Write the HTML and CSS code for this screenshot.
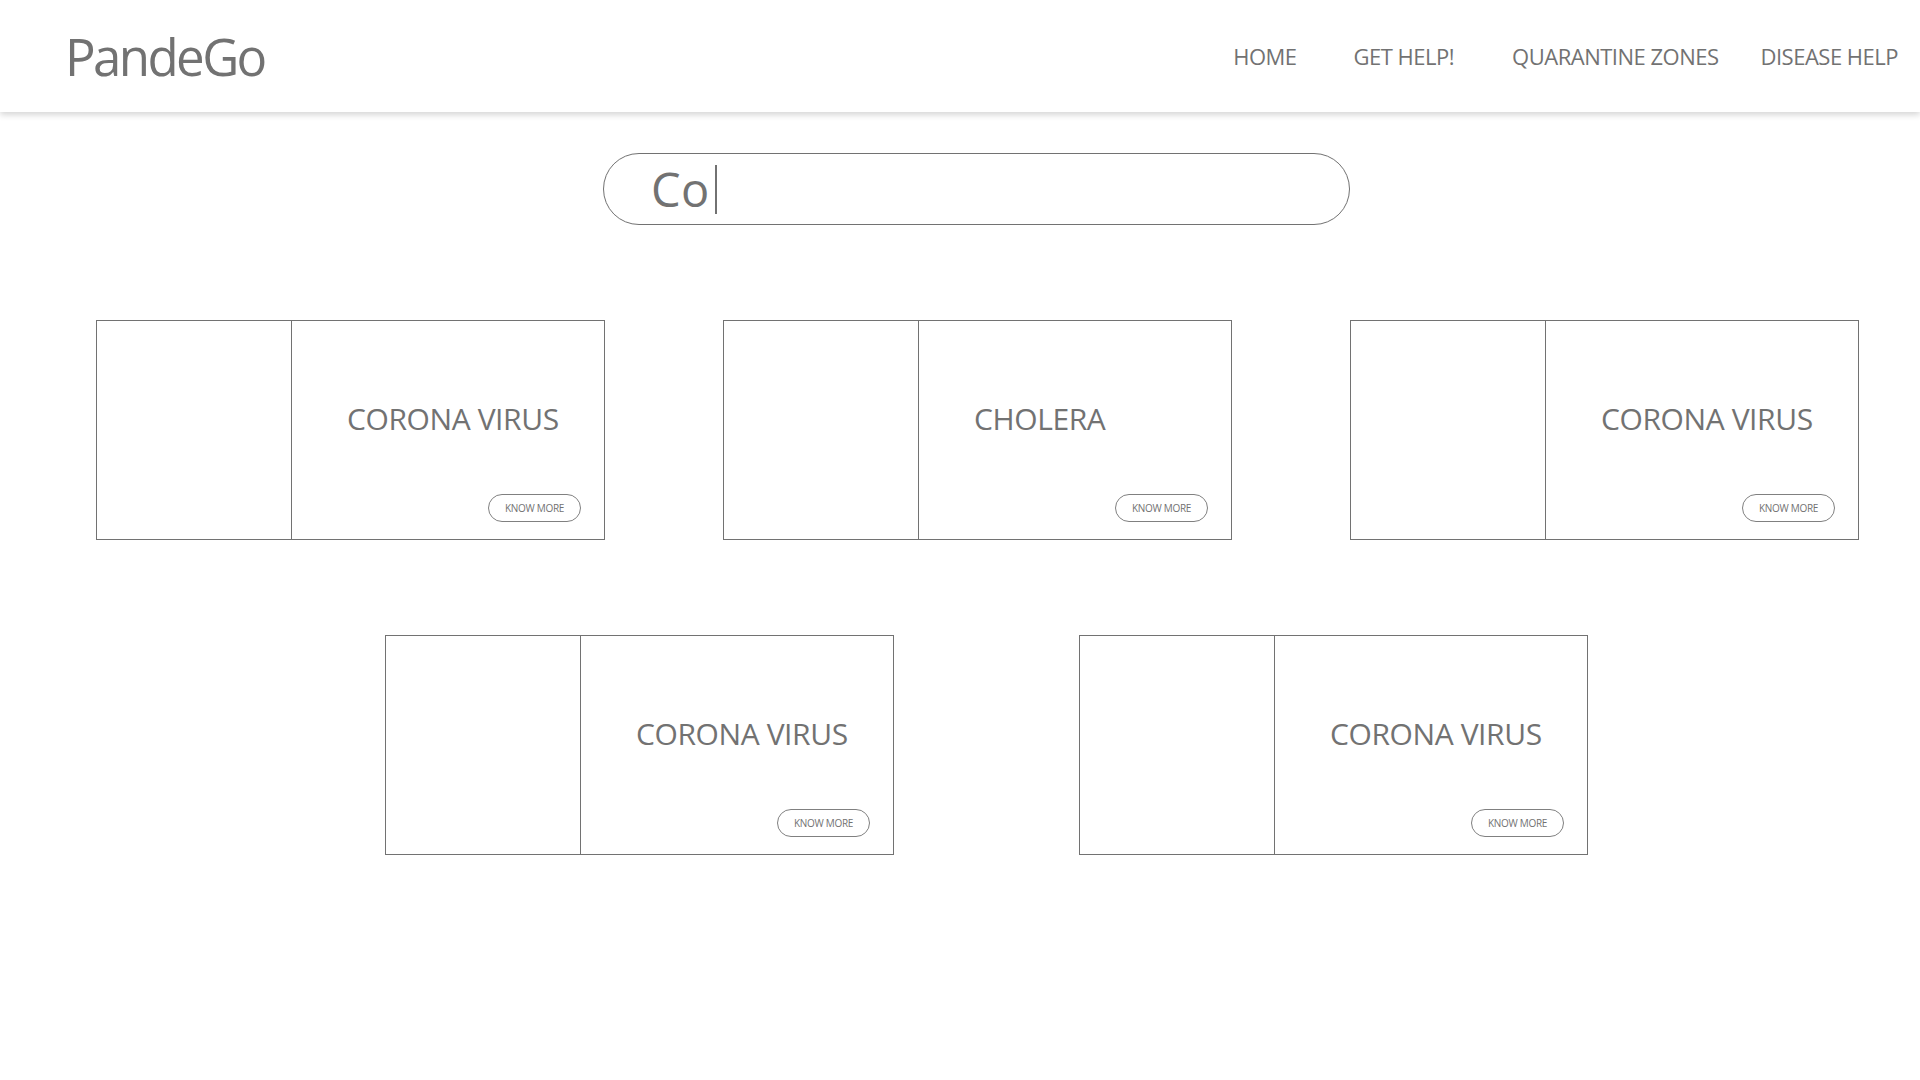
FILE: index.html
```html
<!DOCTYPE html>
<html lang="en">
  <head>
    <meta charset="utf-8" />
    <title>PandeGo</title>
    <link rel="stylesheet" href="styles.css">
  </head>
  <body>
    <header class="topbar">
      <div class="brand">PandeGo</div>
      <nav class="menu">
        <a class="menu-home" href="#">HOME</a>
        <a class="menu-help" href="#">GET HELP!</a>
        <a class="menu-zones" href="#">QUARANTINE ZONES</a>
        <a class="menu-disease" href="#">DISEASE HELP</a>
      </nav>
    </header>

    <main class="content">
      <div class="search">
        <span class="query">Co</span><span class="caret"></span>
      </div>

      <section class="row row-top">
        <div class="card">
          <div class="card-pic"></div>
          <div class="card-body">
            <h2 class="card-title">CORONA VIRUS</h2>
            <a class="more" href="#">KNOW MORE</a>
          </div>
        </div>
        <div class="card">
          <div class="card-pic"></div>
          <div class="card-body">
            <h2 class="card-title">CHOLERA</h2>
            <a class="more" href="#">KNOW MORE</a>
          </div>
        </div>
        <div class="card">
          <div class="card-pic"></div>
          <div class="card-body">
            <h2 class="card-title">CORONA VIRUS</h2>
            <a class="more" href="#">KNOW MORE</a>
          </div>
        </div>
      </section>

      <section class="row row-bottom">
        <div class="card">
          <div class="card-pic"></div>
          <div class="card-body">
            <h2 class="card-title">CORONA VIRUS</h2>
            <a class="more" href="#">KNOW MORE</a>
          </div>
        </div>
        <div class="card">
          <div class="card-pic"></div>
          <div class="card-body">
            <h2 class="card-title">CORONA VIRUS</h2>
            <a class="more" href="#">KNOW MORE</a>
          </div>
        </div>
      </section>
    </main>
  </body>
</html>
```

FILE: styles.css
```css
* {
  box-sizing: border-box;
}

body {
  margin: 0;
  padding: 0;
  font-family: "Open Sans", "Noto Sans", sans-serif;
  color: #727272;
  background-color: #fff;
}

.topbar {
  height: 112px;
  display: flex;
  align-items: center;
  justify-content: space-between;
  padding-left: 65px;
  background-color: #fff;
  box-shadow: 0 3px 6px rgba(0, 0, 0, 0.16);
}

.brand {
  font-size: 51px;
  letter-spacing: -2.6px;
}

.menu {
  display: flex;
  align-items: center;
  margin-right: 22px;
}

.menu a {
  color: #727272;
  text-decoration: none;
  font-size: 22px;
  letter-spacing: -0.5px;
}

.menu-home {
  margin-right: 57px;
}

.menu-help {
  margin-right: 58px;
}

.menu-zones {
  margin-right: 42px;
}

.content {
  width: 1764px;
  margin-left: 96px;
}

.search {
  width: 747px;
  height: 72px;
  margin: 41px 0 0 507px;
  padding-left: 47px;
  display: flex;
  align-items: center;
  border: 1px solid #727272;
  border-radius: 36px;
}

.query {
  font-size: 47px;
  letter-spacing: 0.5px;
}

.caret {
  width: 2px;
  height: 49px;
  margin-left: 5px;
  background-color: #727272;
}

.row {
  display: flex;
  margin-top: 95px;
}

.row-top {
  gap: 118px;
}

.row-bottom {
  gap: 185px;
  padding-left: 289px;
}

.card {
  width: 509px;
  height: 220px;
  display: flex;
  border: 1px solid #727272;
}

.card-pic {
  width: 195px;
  border-right: 1px solid #727272;
}

.card-body {
  flex: 1;
  display: flex;
  flex-direction: column;
  padding: 78px 23px 17px 55px;
}

.card-title {
  margin: 0;
  font-size: 30px;
  font-weight: normal;
  line-height: 40px;
  letter-spacing: -0.4px;
}

.more {
  align-self: flex-end;
  margin-top: auto;
  width: 93px;
  height: 28px;
  display: flex;
  align-items: center;
  justify-content: center;
  border: 1px solid #808080;
  border-radius: 14px;
  color: #727272;
  text-decoration: none;
  font-size: 10px;
  letter-spacing: -0.3px;
}
```
